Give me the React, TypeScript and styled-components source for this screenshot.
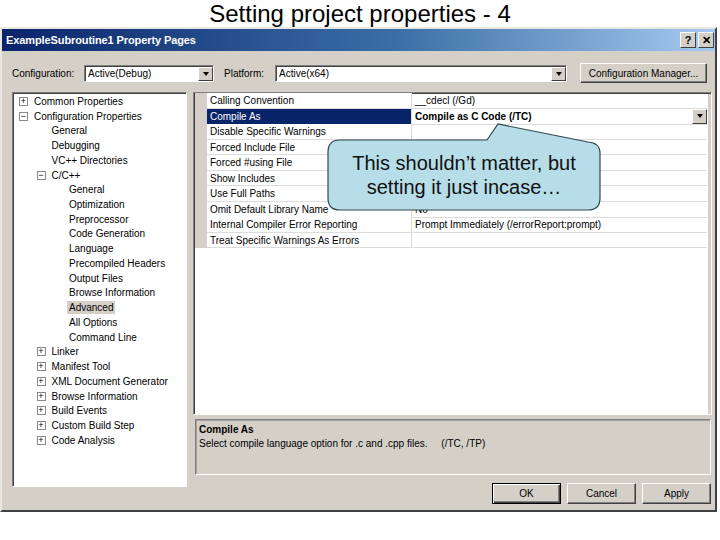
import React from "react";
import styled, { createGlobalStyle } from "styled-components";

const GlobalStyle = createGlobalStyle`
  html, body {
    margin: 0;
    padding: 0;
    background: #ffffff;
  }
  body {
    font-family: "Liberation Sans", Arial, sans-serif;
    color: #000;
  }
`;

type TreeItem = { label: string; level: number; toggle?: "+" | "-"; selected?: boolean };

const treeItems: TreeItem[] = [
  { label: "Common Properties", level: 0, toggle: "+" },
  { label: "Configuration Properties", level: 0, toggle: "-" },
  { label: "General", level: 1 },
  { label: "Debugging", level: 1 },
  { label: "VC++ Directories", level: 1 },
  { label: "C/C++", level: 1, toggle: "-" },
  { label: "General", level: 2 },
  { label: "Optimization", level: 2 },
  { label: "Preprocessor", level: 2 },
  { label: "Code Generation", level: 2 },
  { label: "Language", level: 2 },
  { label: "Precompiled Headers", level: 2 },
  { label: "Output Files", level: 2 },
  { label: "Browse Information", level: 2 },
  { label: "Advanced", level: 2, selected: true },
  { label: "All Options", level: 2 },
  { label: "Command Line", level: 2 },
  { label: "Linker", level: 1, toggle: "+" },
  { label: "Manifest Tool", level: 1, toggle: "+" },
  { label: "XML Document Generator", level: 1, toggle: "+" },
  { label: "Browse Information", level: 1, toggle: "+" },
  { label: "Build Events", level: 1, toggle: "+" },
  { label: "Custom Build Step", level: 1, toggle: "+" },
  { label: "Code Analysis", level: 1, toggle: "+" },
];

type Prop = { name: string; value: string; selected?: boolean };

// values under the callout are covered in the shot, so they stay empty
const properties: Prop[] = [
  { name: "Calling Convention", value: "__cdecl (/Gd)" },
  { name: "Compile As", value: "Compile as C Code (/TC)", selected: true },
  { name: "Disable Specific Warnings", value: "" },
  { name: "Forced Include File", value: "" },
  { name: "Forced #using File", value: "" },
  { name: "Show Includes", value: "" },
  { name: "Use Full Paths", value: "" },
  { name: "Omit Default Library Name", value: "No" },
  { name: "Internal Compiler Error Reporting", value: "Prompt Immediately (/errorReport:prompt)" },
  { name: "Treat Specific Warnings As Errors", value: "" },
];

const App = () => {
  return (
    <>
      <GlobalStyle />
      <Page>
        <Heading>Setting project properties - 4</Heading>
        <Dialog>
          <TitleBar>
            <TitleText>ExampleSubroutine1 Property Pages</TitleText>
            <CaptionButtons>
              <CaptionButton>?</CaptionButton>
              <CaptionButton>✕</CaptionButton>
            </CaptionButtons>
          </TitleBar>

          <ConfigRow>
            <FieldLabel>Configuration:</FieldLabel>
            <Select width={130}>
              <SelectText>Active(Debug)</SelectText>
              <DropButton><Arrow /></DropButton>
            </Select>
            <FieldLabel gap={10}>Platform:</FieldLabel>
            <Select width={292}>
              <SelectText>Active(x64)</SelectText>
              <DropButton><Arrow /></DropButton>
            </Select>
            <ManagerButton>Configuration Manager...</ManagerButton>
          </ConfigRow>

          <Main>
            <TreePanel>
              {treeItems.map((item, i) => (
                <TreeRow key={i} level={item.level}>
                  <Toggle visible={!!item.toggle}>{item.toggle === "-" ? "−" : "+"}</Toggle>
                  <TreeLabel selected={item.selected}>{item.label}</TreeLabel>
                </TreeRow>
              ))}
            </TreePanel>

            <RightColumn>
              <GridPanel>
                {properties.map((p) => (
                  <GridRow key={p.name}>
                    <Gutter />
                    <NameCell selected={p.selected}>{p.name}</NameCell>
                    <ValueCell bold={p.selected}>
                      <span>{p.value}</span>
                      {p.selected && (
                        <CellDropButton><Arrow /></CellDropButton>
                      )}
                    </ValueCell>
                  </GridRow>
                ))}
                <GridBlank />

                <CalloutShape width="280" height="95" viewBox="0 0 280 95">
                  <path
                    d="M16 19 L163 19 L174 3 L264 21 Q276 22 276 32 L276 77 Q276 89 264 89 L16 89 Q4 89 4 77 L4 31 Q4 19 16 19 Z"
                    fill="#b7dde8"
                    stroke="#2e4650"
                    strokeWidth="1.2"
                  />
                </CalloutShape>
                <CalloutText>
                  This shouldn’t matter, but
                  <br />
                  setting it just incase…
                </CalloutText>
              </GridPanel>

              <DescBox>
                <DescTitle>Compile As</DescTitle>
                <DescText>Select compile language option for .c and .cpp files.&nbsp;&nbsp;&nbsp;&nbsp; (/TC, /TP)</DescText>
              </DescBox>

              <ButtonRow>
                <DialogButton isDefault>OK</DialogButton>
                <DialogButton>Cancel</DialogButton>
                <DialogButton>Apply</DialogButton>
              </ButtonRow>
            </RightColumn>
          </Main>
        </Dialog>
      </Page>
    </>
  );
};

const Page = styled.div`
  width: 720px;
  height: 540px;
  overflow: hidden;
  background: #fff;
`;

const Heading = styled.div`
  height: 27px;
  line-height: 27px;
  text-align: center;
  font-family: "Liberation Sans", Arial, sans-serif;
  font-size: 24px;
  color: #000;
`;

const Dialog = styled.div`
  width: 717px;
  box-sizing: border-box;
  background: #d4d0c8;
  border: 2px solid;
  border-color: #e8e6e0 #404040 #404040 #e8e6e0;
  font-family: "Liberation Sans", Arial, sans-serif;
  font-size: 10px;
  color: #000;
`;

const TitleBar = styled.div`
  height: 22px;
  display: flex;
  align-items: center;
  justify-content: space-between;
  padding: 0 1px 0 4px;
  background: linear-gradient(to right, #0a246a 0%, #3a6ea5 55%, #a6caf0 100%);
`;

const TitleText = styled.span`
  color: #fff;
  font-weight: bold;
  font-size: 11px;
  letter-spacing: -0.1px;
`;

const CaptionButtons = styled.div`
  display: flex;
  gap: 2px;
`;

const CaptionButton = styled.div`
  width: 14px;
  height: 14px;
  display: flex;
  align-items: center;
  justify-content: center;
  background: #d4d0c8;
  border: 1px solid;
  border-color: #fff #404040 #404040 #fff;
  font-weight: bold;
  font-size: 11px;
  color: #000;
`;

const ConfigRow = styled.div`
  height: 20px;
  display: flex;
  align-items: center;
  padding: 12px 0 9px 10px;
`;

const FieldLabel = styled.span<{ gap?: number }>`
  margin-left: ${(p) => p.gap ?? 0}px;
  width: ${(p) => (p.gap ? 51 : 72)}px;
  white-space: nowrap;
`;

const Select = styled.div<{ width: number }>`
  width: ${(p) => p.width}px;
  height: 17px;
  box-sizing: border-box;
  display: flex;
  align-items: stretch;
  background: #fff;
  border: 1px solid;
  border-color: #808080 #fff #fff #808080;
  box-shadow: inset 1px 1px 0 #404040;
`;

const SelectText = styled.span`
  flex: 1;
  padding: 0 3px;
  line-height: 15px;
`;

const DropButton = styled.div`
  width: 15px;
  box-sizing: border-box;
  display: flex;
  align-items: center;
  justify-content: center;
  background: #d4d0c8;
  border: 1px solid;
  border-color: #fff #404040 #404040 #fff;
  margin: 1px 0 0 0;
`;

const Arrow = styled.span`
  width: 0;
  height: 0;
  border-left: 3px solid transparent;
  border-right: 3px solid transparent;
  border-top: 4px solid #000;
`;

const ManagerButton = styled.div`
  margin-left: 13px;
  width: 127px;
  height: 20px;
  box-sizing: border-box;
  display: flex;
  align-items: center;
  justify-content: center;
  background: #d4d0c8;
  border: 1px solid;
  border-color: #fff #404040 #404040 #fff;
  box-shadow: inset -1px -1px 0 #808080;
`;

const Main = styled.div`
  display: flex;
  gap: 6px;
  padding: 0 3px 6px 10px;
`;

const TreePanel = styled.div`
  width: 175px;
  height: 395px;
  box-sizing: border-box;
  background: #fff;
  border: 1px solid;
  border-color: #808080 #fff #fff #808080;
  box-shadow: inset 1px 1px 0 #404040;
  padding-top: 1px;
`;

const TreeRow = styled.div<{ level: number }>`
  height: 14.74px;
  display: flex;
  align-items: center;
  padding-left: ${(p) => 6 + p.level * 17.5}px;
  white-space: nowrap;
`;

const Toggle = styled.span<{ visible: boolean }>`
  width: 9px;
  height: 9px;
  box-sizing: border-box;
  margin-right: 6px;
  border: 1px solid #8a8a8a;
  display: flex;
  align-items: center;
  justify-content: center;
  font-size: 9px;
  line-height: 7px;
  color: #000;
  visibility: ${(p) => (p.visible ? "visible" : "hidden")};
`;

const TreeLabel = styled.span<{ selected?: boolean }>`
  padding: 1px 2px;
  margin-left: -2px;
  background: ${(p) => (p.selected ? "#d4d0c8" : "transparent")};
`;

const RightColumn = styled.div`
  flex: 1;
  display: flex;
  flex-direction: column;
`;

const GridPanel = styled.div`
  position: relative;
  height: 323px;
  box-sizing: border-box;
  display: flex;
  flex-direction: column;
  background: #fff;
  border: 1px solid;
  border-color: #808080 #fff #fff #808080;
  box-shadow: inset 1px 1px 0 #404040, inset -3px 0 0 #d4d0c8;
  padding: 0 4px 0 1px;
`;

const GridRow = styled.div`
  height: 15.55px;
  display: grid;
  grid-template-columns: 12px 205px 1fr;
`;

const Gutter = styled.div`
  background: #d4d0c8;
`;

const NameCell = styled.div<{ selected?: boolean }>`
  padding-left: 3px;
  line-height: 15px;
  white-space: nowrap;
  overflow: hidden;
  border-bottom: 1px solid #dcdcdc;
  border-right: 1px solid #dcdcdc;
  background: ${(p) => (p.selected ? "#0a246a" : "#fff")};
  color: ${(p) => (p.selected ? "#fff" : "#000")};
`;

const ValueCell = styled.div<{ bold?: boolean }>`
  display: flex;
  justify-content: space-between;
  align-items: stretch;
  padding-left: 3px;
  line-height: 15px;
  white-space: nowrap;
  border-bottom: 1px solid #dcdcdc;
  font-weight: ${(p) => (p.bold ? "bold" : "normal")};
`;

const CellDropButton = styled.div`
  width: 15px;
  box-sizing: border-box;
  display: flex;
  align-items: center;
  justify-content: center;
  background: #d4d0c8;
  border: 1px solid;
  border-color: #fff #404040 #404040 #fff;
`;

const GridBlank = styled.div`
  flex: 1;
  margin-left: 12px;
  background: #fff;
`;

const CalloutShape = styled.svg`
  position: absolute;
  left: 130px;
  top: 28px;
  overflow: visible;
`;

const CalloutText = styled.div`
  position: absolute;
  left: 134px;
  top: 47px;
  width: 272px;
  height: 70px;
  display: flex;
  align-items: center;
  justify-content: center;
  text-align: center;
  font-family: "Liberation Sans", Arial, sans-serif;
  font-size: 20px;
  line-height: 24px;
  color: #111;
`;

const DescBox = styled.div`
  margin: 4px 1px 0 2px;
  height: 56px;
  box-sizing: border-box;
  padding: 3px 3px;
  border: 1px solid;
  border-color: #808080 #fff #fff #808080;
  box-shadow: inset 1px 1px 0 #a0a0a0;
  line-height: 14px;
`;

const DescTitle = styled.div`
  font-weight: bold;
`;

const DescText = styled.div`
  white-space: nowrap;
`;

const ButtonRow = styled.div`
  margin-top: 8px;
  display: flex;
  justify-content: flex-end;
  gap: 6px;
  padding-right: 1px;
`;

const DialogButton = styled.div<{ isDefault?: boolean }>`
  width: 69px;
  height: 21px;
  box-sizing: border-box;
  display: flex;
  align-items: center;
  justify-content: center;
  background: #d4d0c8;
  border: 1px solid;
  border-color: ${(p) => (p.isDefault ? "#000" : "#fff #404040 #404040 #fff")};
  box-shadow: ${(p) =>
    p.isDefault
      ? "inset 1px 1px 0 #fff, inset -1px -1px 0 #404040, inset -2px -2px 0 #808080"
      : "inset -1px -1px 0 #808080"};
`;

export default App;
